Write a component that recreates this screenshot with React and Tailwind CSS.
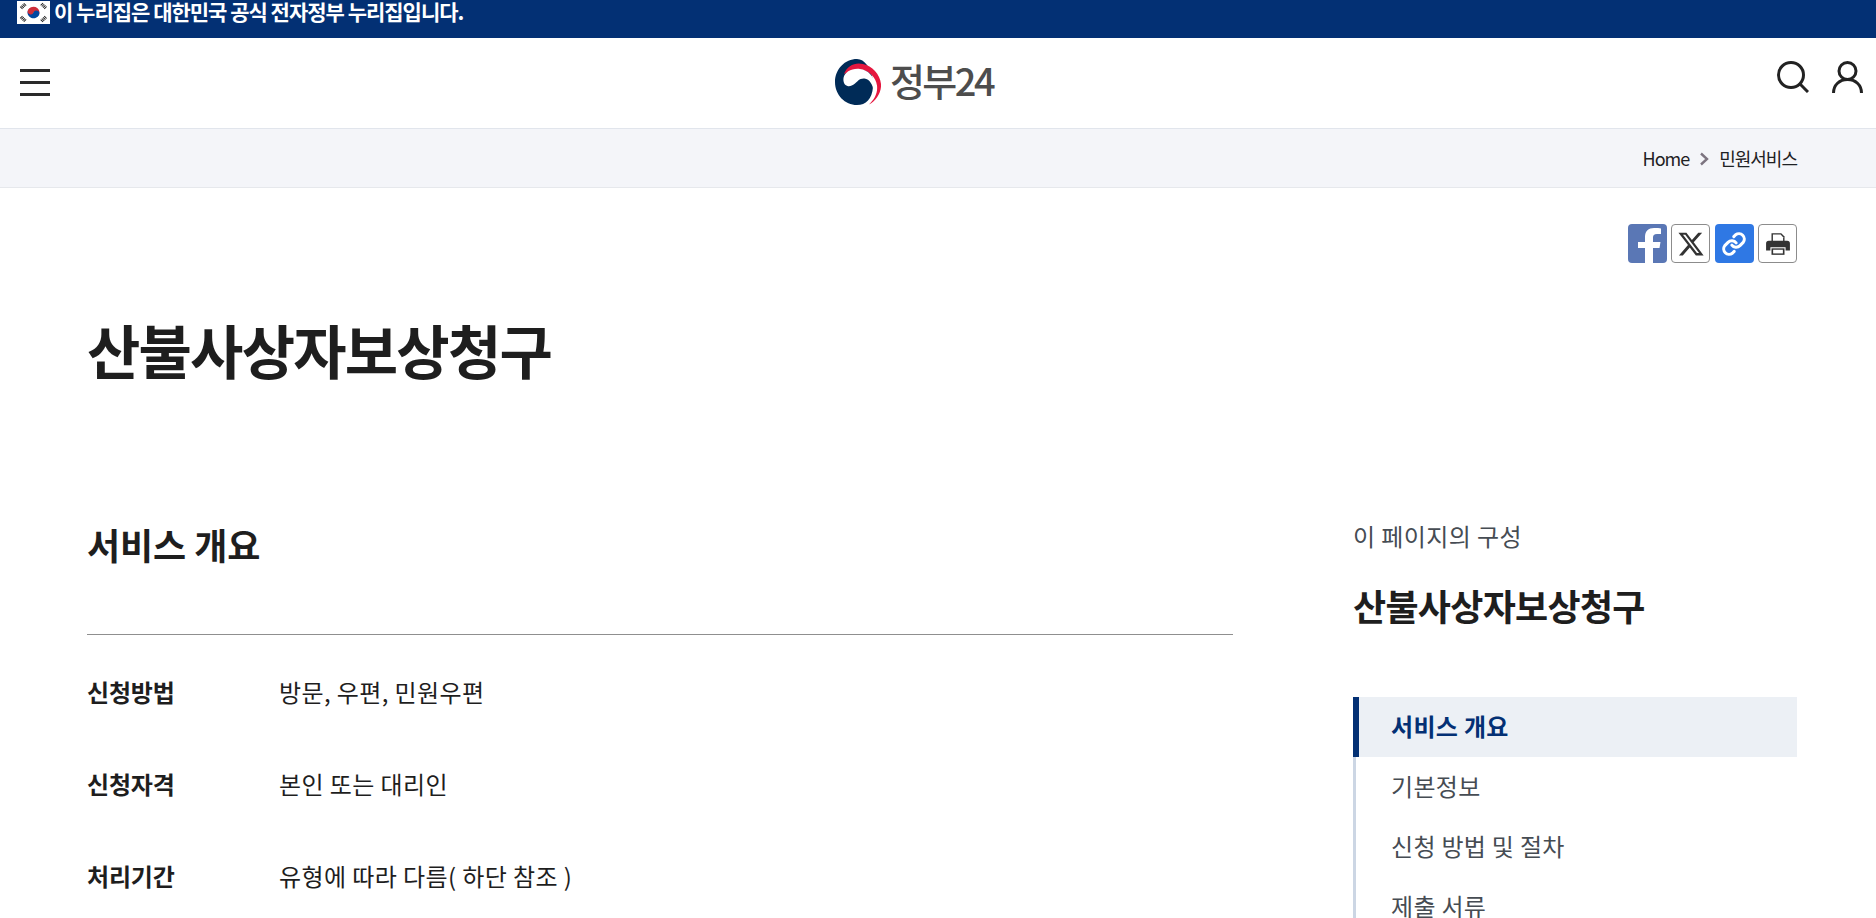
import React from 'react'

const font = { fontFamily: '"Noto Sans CJK KR", "Noto Sans", sans-serif' }

function Flag() {
  return (
    <svg width="33" height="23" viewBox="0 0 33 24" preserveAspectRatio="none" className="shrink-0">
      <rect width="33" height="24" fill="#fff" />
      <g transform="rotate(20 16.500 12)">
        <path d="M10.500 12a6 6 0 0 1 12 0z" fill="#cd2e3a" />
        <path d="M10.500 12a6 6 0 0 0 12 0z" fill="#0047a0" />
        <circle cx="13.500" cy="12" r="3" fill="#cd2e3a" />
        <circle cx="19.500" cy="12" r="3" fill="#0047a0" />
      </g>
      <g stroke="#222" strokeWidth="3.400" strokeDasharray="1 0.700">
        <path d="M4 7.500 8.500 3" />
        <path d="M24.500 3 29 7.500" />
        <path d="M4 16.500 8.500 21" />
        <path d="M24.500 21 29 16.500" />
      </g>
    </svg>
  )
}

function Logo() {
  return (
    <svg width="46" height="46" viewBox="0 0 46 46" className="shrink-0">
      <path d="M22 0C10 0 0 10 0 23s10 23 22 23c9 0 15-6 16-18 .5-6-1-16-6-22C29 2 26 0 22 0z" fill="#002b57" />
      <path d="M9 15C12 7 20 3 28 5c9 2 17 10 18 20 .7 8-5 17-12 20.500 5-5 9-11 8-19-1-8-8-15-15-15.500-7-.5-12 1-18 4z" fill="#e5173f" />
      <path d="M8.500 19C9.500 13 17 9 25 10c8 1 14 7 14.500 15 .2 3-.2 5-1 7-.5-6-4-12-9-12.500-5-.5-7 3-9.500 5-3 2.500-5.500 3-7.500 2.500-3-.8-4.500-4-4-8z" fill="#fff" />
      <path d="M39.500 25c.5 6-1.500 13-5.500 18 3-1 7-7 7-13 0-2-.5-3.500-1.500-5z" fill="#fff" />
    </svg>
  )
}

function ShareIcons() {
  return (
    <div className="flex justify-end gap-[4.500px]">
      <button className="w-[39px] h-[39px] rounded-[4px] bg-[#5a77b5] overflow-hidden flex items-end justify-end pr-[5px]">
        <svg width="24" height="35" viewBox="0 0 24 35">
          <path d="M7 35V20H0v-6h7V9c0-6 3.500-9 9-9 2.400 0 6 .2 7 .4v5.600h-4c-3 0-4 1.300-4 3.500V14h7.500l-1 6H15v15z" fill="#fff" />
        </svg>
      </button>
      <button className="w-[39px] h-[39px] rounded-[4px] border border-[#8c8c8c] bg-white flex items-center justify-center">
        <svg width="28" height="28" viewBox="0 0 24 24">
          <path d="M18.244 2.250h3.308l-7.227 8.260 8.502 11.240H16.170l-5.214-6.817L4.990 21.750H1.680l7.730-8.835L1.254 2.250H8.080l4.713 6.231zm-1.161 17.520h1.833L7.084 4.126H5.117z" fill="#333" />
        </svg>
      </button>
      <button className="w-[39px] h-[39px] rounded-[4px] bg-[#2f78e4] flex items-center justify-center">
        <svg width="26" height="26" viewBox="0 0 24 24" fill="none" stroke="#fff" strokeWidth="2.800" strokeLinecap="round" strokeLinejoin="round">
          <path d="M10 13a5 5 0 0 0 7.500.5l3-3a5 5 0 0 0-7-7l-1.700 1.700" />
          <path d="M14 11a5 5 0 0 0-7.500-.5l-3 3a5 5 0 0 0 7 7l1.700-1.700" />
        </svg>
      </button>
      <button className="w-[39px] h-[39px] rounded-[4px] border border-[#8c8c8c] bg-white flex items-center justify-center">
        <svg width="26" height="26" viewBox="0 0 24 24" fill="#333">
          <path d="M6 2h9l3 3v5H6z" />
          <path d="M7.300 3.300v6h9.400V5.700l-2.300-2.400z" fill="#fff" />
          <path d="M3.500 9h17A2.500 2.500 0 0 1 23 11.500V18h-4v-3H5v3H1v-6.500A2.500 2.500 0 0 1 3.500 9z" />
          <path d="M6 16h12v6H6z" />
          <path d="M7.500 17.300h9v3.400h-9z" fill="#fff" />
        </svg>
      </button>
    </div>
  )
}

const rows = [
  ['신청방법', '방문, 우편, 민원우편'],
  ['신청자격', '본인 또는 대리인'],
  ['처리기간', '유형에 따라 다름( 하단 참조 )'],
]

const nav = ['기본정보', '신청 방법 및 절차', '제출 서류']

export default function App() {
  return (
    <div className="h-[918px] overflow-hidden bg-white text-[#1e1e1e]" style={font}>
      <div className="h-[38px] bg-[#033074] flex items-start pt-[1px] pl-[17px] gap-[4px]">
        <Flag />
        <span className="text-[21px] font-bold text-white tracking-[-1px] leading-[23px] -mt-[1px]">이 누리집은 대한민국 공식 전자정부 누리집입니다.</span>
      </div>

      <header className="h-[91px] border-b border-[#e1e5ec] flex items-center justify-between pl-[20px] pr-[13px]">
        <div className="w-[30px] flex flex-col gap-[9px] mt-[-1px]">
          <span className="h-[3px] bg-[#2a2a2a]" />
          <span className="h-[3px] bg-[#2a2a2a]" />
          <span className="h-[3px] bg-[#2a2a2a]" />
        </div>
        <div className="flex items-center gap-[9px] ml-[1px] -mt-[3px]">
          <Logo />
          <span className="text-[38px] font-medium text-[#4d4d4d] tracking-[-2.500px] leading-none -mt-[4px]">정부24</span>
        </div>
        <div className="flex items-center gap-[23px] -mt-[12px]">
          <svg width="32" height="32" viewBox="0 0 32 32" fill="none" stroke="#222" strokeWidth="3">
            <circle cx="14" cy="14" r="12.500" />
            <path d="M23 23l8 8" />
          </svg>
          <svg width="31" height="32" viewBox="0 0 31 32" fill="none" stroke="#222" strokeWidth="3">
            <circle cx="15.500" cy="10" r="8.500" />
            <path d="M1.500 32c0-8 6-13.500 14-13.500s14 5.500 14 13.500" />
          </svg>
        </div>
      </header>

      <div className="h-[59px] bg-[#f4f5f9] border-b border-[#e6e8ec] flex items-center justify-end pr-[79px] pt-[1px] text-[18px] tracking-[-1px] text-[#1e2124]">
        <span>Home</span>
        <svg width="10" height="14" viewBox="0 0 10 14" fill="none" stroke="#7c7480" strokeWidth="2.400" className="mx-[10px]">
          <path d="M2 1.500 8 7l-6 5.500" />
        </svg>
        <span>민원서비스</span>
      </div>

      <main className="pl-[87px] pr-[79px]">
        <div className="pt-[36px]">
          <ShareIcons />
        </div>
        <h1 className="mt-[46px] text-[58px] font-bold leading-[80px] tracking-[-1.800px] text-[#1e1e1e]">산불사상자보상청구</h1>

        <div className="mt-[131px] flex justify-between">
          <section className="w-[1146px]">
            <h2 className="text-[36px] font-bold leading-[48px] tracking-[-0.100px] text-[#1e1e1e] pb-[66px] border-b border-[#8f8f8f]">서비스 개요</h2>
            <dl className="mt-[42px] flex flex-col gap-[62px] text-[24px] leading-[30px]">
              {rows.map(([k, v]) => (
                <div key={k} className="flex">
                  <dt className="w-[192px] font-bold tracking-[-0.200px]">{k}</dt>
                  <dd className="tracking-[0.400px]">{v}</dd>
                </div>
              ))}
            </dl>
          </section>

          <aside className="w-[444px] -mt-[6px]">
            <p className="text-[24px] leading-[30px] tracking-[0.400px] text-[#464c53] mt-[7px]">이 페이지의 구성</p>
            <h3 className="mt-[30px] text-[36px] font-bold leading-[48px] tracking-[-0.700px]">산불사상자보상청구</h3>
            <nav className="mt-[68px] border-l-[3px] border-[#ccd6e4]">
              <div className="-ml-[3px] h-[60px] bg-[#ecf0f5] border-l-[6px] border-[#033074] flex items-center pl-[32px] pb-[3px] text-[24px] tracking-[0.300px] font-bold text-[#033074]">서비스 개요</div>
              {nav.map(n => (
                <div key={n} className="h-[60px] flex items-center pl-[35px] pb-[3px] text-[24px] tracking-[0.300px] text-[#464c53]">{n}</div>
              ))}
            </nav>
          </aside>
        </div>
      </main>
    </div>
  )
}
